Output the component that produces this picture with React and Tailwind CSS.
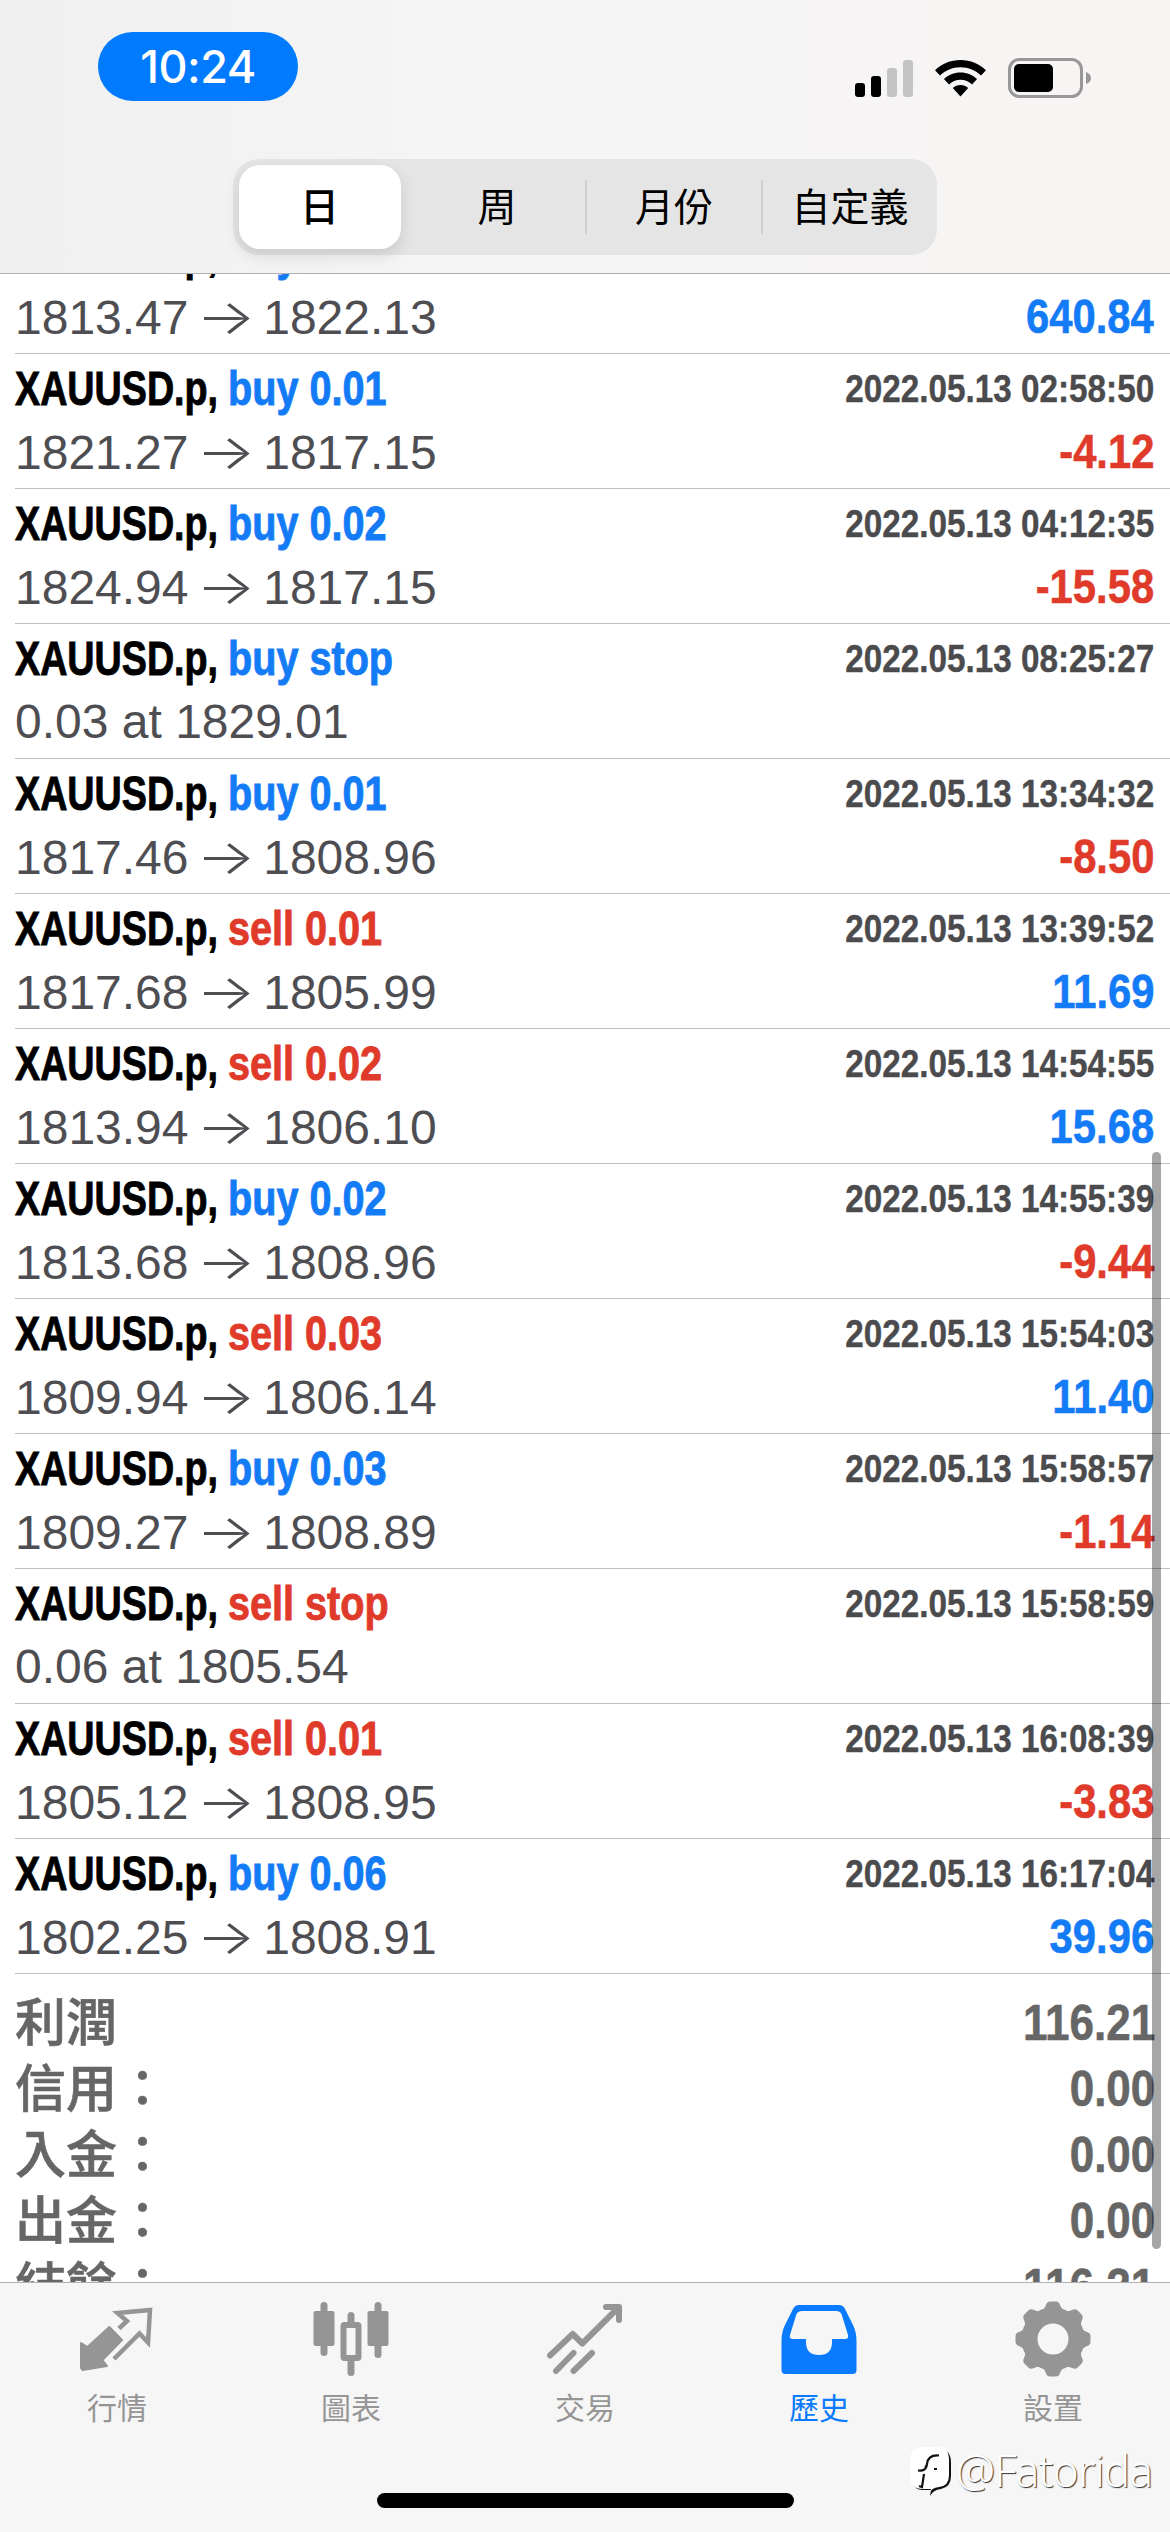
import clsx from "clsx";

const orders = [
  { side: "buy", size: "0.01", prices: ["1821.27", "1817.15"], time: "2022.05.13 02:58:50", profit: "-4.12" },
  { side: "buy", size: "0.02", prices: ["1824.94", "1817.15"], time: "2022.05.13 04:12:35", profit: "-15.58" },
  { side: "buy", size: "stop", note: "0.03 at 1829.01", time: "2022.05.13 08:25:27" },
  { side: "buy", size: "0.01", prices: ["1817.46", "1808.96"], time: "2022.05.13 13:34:32", profit: "-8.50" },
  { side: "sell", size: "0.01", prices: ["1817.68", "1805.99"], time: "2022.05.13 13:39:52", profit: "11.69" },
  { side: "sell", size: "0.02", prices: ["1813.94", "1806.10"], time: "2022.05.13 14:54:55", profit: "15.68" },
  { side: "buy", size: "0.02", prices: ["1813.68", "1808.96"], time: "2022.05.13 14:55:39", profit: "-9.44" },
  { side: "sell", size: "0.03", prices: ["1809.94", "1806.14"], time: "2022.05.13 15:54:03", profit: "11.40" },
  { side: "buy", size: "0.03", prices: ["1809.27", "1808.89"], time: "2022.05.13 15:58:57", profit: "-1.14" },
  { side: "sell", size: "stop", note: "0.06 at 1805.54", time: "2022.05.13 15:58:59" },
  { side: "sell", size: "0.01", prices: ["1805.12", "1808.95"], time: "2022.05.13 16:08:39", profit: "-3.83" },
  { side: "buy", size: "0.06", prices: ["1802.25", "1808.91"], time: "2022.05.13 16:17:04", profit: "39.96" },
];

const totals = [
  { label: "利潤", value: "116.21" },
  { label: "信用：", value: "0.00" },
  { label: "入金：", value: "0.00" },
  { label: "出金：", value: "0.00" },
  { label: "結餘：", value: "116.21" },
];

const ranges = ["日", "周", "月份", "自定義"];

export default function App() {
  return (
    <div className="w-[1170px] h-[2532px] flex flex-col overflow-hidden bg-white font-['Liberation_Sans','Noto_Sans_CJK_TC',sans-serif]">
      <Header />
      <History />
      <TabBar />
    </div>
  );
}

const Header = () => (
  <header className="h-[274px] shrink-0 border-b border-[#b0b0b2] bg-linear-to-r from-[#f0f0f1] via-[#f5f5f6] via-40% to-[#f8f4f3]">
    {/* Status bar */}
    <div className="h-[159px] pt-8 pl-[98px] pr-[79px] flex justify-between items-start">
      <div className="w-[200px] h-[69px] rounded-full bg-[#007aff] text-white flex items-center justify-center font-['Inter',sans-serif] font-medium text-[45px] leading-none tracking-[-0.5px]">
        10:24
      </div>
      <div className="flex items-center gap-[22px] pt-[26px]">
        <SignalIcon />
        <WifiIcon />
        <BatteryIcon />
      </div>
    </div>

    {/* Range switch */}
    <div className="mx-auto w-[704px] h-24 rounded-[26px] bg-[#e5e5e6] flex items-center">
      {ranges.map((range, i) => (
        <div
          key={range}
          className={clsx(
            "w-44 flex items-center justify-center text-[39px] leading-none text-black",
            i === 0 ? "h-24 font-medium" : "h-[54px]",
            i > 1 && "border-l-2 border-[#cfcfd2]"
          )}
        >
          {i === 0 ? (
            <span className="w-[162px] h-[84px] mr-[3px] rounded-[21px] bg-white shadow-[0_6px_16px_rgba(0,0,0,0.12)] flex items-center justify-center">
              {range}
            </span>
          ) : (
            range
          )}
        </div>
      ))}
    </div>
  </header>
);

const History = () => (
  <main className="relative h-[2008px] shrink-0 overflow-hidden">
    {/* The first order is scrolled partly under the header */}
    <div className="-mt-[55px]">
      <OrderRow side="buy" size="0.74" prices={["1813.47", "1822.13"]} profit="640.84" />
      {orders.map((order) => (
        <OrderRow key={order.time} {...order} />
      ))}
    </div>

    <div className="pt-[17px] px-[15px]">
      {totals.map(({ label, value }) => (
        <div key={label} className="h-[66px] flex justify-between text-[#666666]">
          <span className="text-[51px] leading-[66px] font-medium [-webkit-text-stroke:0.6px]">{label}</span>
          <span className="text-[50px] leading-[64px] font-bold origin-right scale-x-[0.88] [-webkit-text-stroke:0.6px]">{value}</span>
        </div>
      ))}
    </div>

    <div className="absolute right-[9px] top-[878px] w-[9px] h-[1097px] rounded-full bg-black/35" />
  </main>
);

const OrderRow = ({ side, size, prices, note, time, profit }) => (
  <div className="ml-[15px] h-[135px] border-b border-[#bfbfc2] pr-4 leading-none">
    <div className="h-[74px] pt-[11px] flex justify-between text-[48px] font-bold whitespace-nowrap">
      <div className="flex [-webkit-text-stroke:0.9px]">
        <span className="w-[213px] origin-left scale-x-[0.785] text-black">XAUUSD.p,</span>
        <span className={clsx("origin-left scale-x-[0.825]", side === "buy" ? "text-[#147bf6]" : "text-[#e03a2b]")}>
          {side} {size}
        </span>
      </div>
      <span className="pt-[4px] text-[39px] origin-right scale-x-[0.853] text-[#4b4b4e] [-webkit-text-stroke:0.4px]">{time}</span>
    </div>
    <div className="flex justify-between text-[48px] whitespace-pre">
      <span className="text-[#4e4e52]">
        {prices ? (
          <>
            {prices[0]} <Arrow /> {prices[1]}
          </>
        ) : (
          note
        )}
      </span>
      {profit && (
        <span
          className={clsx(
            "font-bold origin-right scale-x-[0.87] [-webkit-text-stroke:0.6px]",
            profit.startsWith("-") ? "text-[#e03a2b]" : "text-[#147bf6]"
          )}
        >
          {profit}
        </span>
      )}
    </div>
  </div>
);

// Open and close price separator, stretched to a full em
const Arrow = () => (
  <span className="inline-block w-12 text-center leading-none font-['Inter',sans-serif] font-light scale-x-[1.3]">→</span>
);

const TabBar = () => (
  <footer className="relative h-[250px] shrink-0 border-t border-[#b0b0b2] bg-[#f6f6f6]">
    <nav className="pt-[18px] grid grid-cols-5">
      <Tab label="行情" icon={<QuotesIcon />} />
      <Tab label="圖表" icon={<ChartIcon />} />
      <Tab label="交易" icon={<TradeIcon />} />
      <Tab label="歷史" icon={<HistoryIcon />} active />
      <Tab label="設置" icon={<SettingsIcon />} />
    </nav>
    <div className="absolute left-[377px] top-[210px] w-[417px] h-[15px] rounded-full bg-black" />
    <Watermark />
  </footer>
);

const Tab = ({ label, icon, active = false }) => (
  <a className={clsx("flex flex-col items-center", active ? "text-[#0a7bff]" : "text-[#959595]")}>
    {icon}
    <span className="mt-[14px] text-[30px] leading-[36px]">{label}</span>
  </a>
);

const Watermark = () => (
  <div className="absolute left-[909px] top-[164px] flex items-start text-white">
    <svg width="44" height="50" viewBox="0 0 44 50" className="mr-[3px]">
      <path d="M15 2h15q12 0 12 14v13q0 11-10 13-8 1-11 7l1-6h-8Q3 43 3 30V15Q3 2 15 2Z" fill="#111" />
      <path d="M14 0h15q11 0 11 13v15q0 11-10 12-8 1-9 6L22 42h-8Q1 42 1 29V14Q1 0 14 0Z" fill="#fff" />
      <path d="M30 8.500q-11-1-12 8.500l-1 4M9 23.500q8 1 8-5M25 22h3M15 27 13 40l-3-1" fill="none" stroke="#111" strokeWidth="2.200" />
    </svg>
    <span className="font-['Noto_Sans',sans-serif] font-light text-[44px] leading-[50px] -mt-0.5 tracking-[-0.8px] [text-shadow:1px_1px_1px_#333]">
      @Fatorida
    </span>
  </div>
);

// Status bar icons
const SignalIcon = () => (
  <svg width="58" height="38" viewBox="0 0 58 38">
    <rect x="0" y="24" width="10" height="14" rx="3" fill="#000" />
    <rect x="16" y="17" width="10" height="21" rx="3" fill="#000" />
    <rect x="32" y="9" width="10" height="29" rx="3" fill="#c4c4c4" />
    <rect x="48" y="1" width="10" height="37" rx="3" fill="#c4c4c4" />
  </svg>
);

const WifiIcon = () => (
  <svg width="51" height="38" viewBox="0 0 51 38">
    <path d="M25.5 1C35.5 1 44.5 5 51 11.3L46 16.6C40.7 11.5 33.5 8.3 25.5 8.3S10.3 11.5 5 16.6L0 11.3C6.5 5 15.5 1 25.5 1Z" />
    <path d="M25.5 13.5c6.500 0 12.300 2.500 16.600 6.600l-5.100 5.300c-3-2.900-7-4.600-11.500-4.600s-8.500 1.700-11.500 4.600l-5.100-5.300c4.300-4.100 10.100-6.600 16.600-6.600Z" />
    <path d="M25.500 26c3 0 5.700 1.100 7.700 3L25.500 37.500 17.800 29c2-1.900 4.700-3 7.700-3Z" />
  </svg>
);

const BatteryIcon = () => (
  <svg width="83" height="40" viewBox="0 0 83 40">
    <rect x="1.500" y="1.500" width="72" height="37" rx="10" fill="none" stroke="#979797" strokeWidth="3" />
    <rect x="6" y="6" width="39" height="28" rx="5" />
    <path d="M78 14q5 2 5 6t-5 6Z" fill="#979797" />
  </svg>
);

// Tab icons
const QuotesIcon = () => (
  <svg width="76" height="76" viewBox="0 0 76 76" fill="none" strokeLinejoin="round">
    <path d="M2 42 8.500 46 30.300 26 43 39 23.500 59 28 65 3.500 69 2 67Z" fill="currentColor" stroke="currentColor" strokeWidth="2" />
    <path d="M40 27.500 48 20 38.500 12 71 9 69 41.500 60.500 32.500 35 58" stroke="currentColor" strokeWidth="4.500" strokeLinejoin="miter" />
  </svg>
);

const ChartIcon = () => (
  <svg width="76" height="76" viewBox="0 0 76 76" fill="none">
    <g fill="currentColor">
      <rect x="0.500" y="10" width="21" height="35" rx="2" />
      <rect x="7.500" y="1" width="7" height="54" rx="3.500" />
      <rect x="54.500" y="10" width="21" height="35" rx="2" />
      <rect x="61.500" y="1" width="7" height="56" rx="3.500" />
      <rect x="34.500" y="11" width="7" height="15" rx="3.500" />
      <rect x="34.500" y="56" width="7" height="19" rx="3.500" />
    </g>
    <rect x="30.500" y="24" width="15" height="33" rx="1" stroke="currentColor" strokeWidth="6" />
  </svg>
);

const TradeIcon = () => (
  <svg width="76" height="76" viewBox="0 0 76 76" fill="none" stroke="currentColor" strokeWidth="6" strokeLinecap="round" strokeLinejoin="round">
    <path d="M3 54.500 25.700 33 35.300 42.500 72 6M59 6h13v13M9 70 26.500 52M26.500 70 45 52" />
  </svg>
);

const HistoryIcon = () => (
  <svg width="76" height="76" viewBox="0 0 76 76">
    <path
      fillRule="evenodd"
      d="M18 4H58Q62 4 64 8L72 24Q75.500 31 75.500 40V69Q75.500 73 71.500 73H4.500Q.5 73 .5 69V40Q.5 31 4 24L12 8Q14 4 18 4ZM21 10Q17 10 15.500 13L9 34Q8 38 12 38H25V41Q25 54 38 54T51 41V38H64Q68 38 67 34L60.500 13Q59 10 55 10Z"
      fill="currentColor"
    />
  </svg>
);

const SettingsIcon = () => (
  <svg width="76" height="76" viewBox="0 0 76 76" fill="none">
    <circle cx="38" cy="38" r="23.500" stroke="currentColor" strokeWidth="16" />
    <g fill="currentColor">
      {[0, 45, 90, 135, 180, 225, 270, 315].map((angle) => (
        <path key={angle} transform={`rotate(${angle} 38 38)`} d="M25 11Q29 9 31 4 32 .5 35 .5H41Q44 .5 45 4 47 9 51 11Z" />
      ))}
    </g>
  </svg>
);
